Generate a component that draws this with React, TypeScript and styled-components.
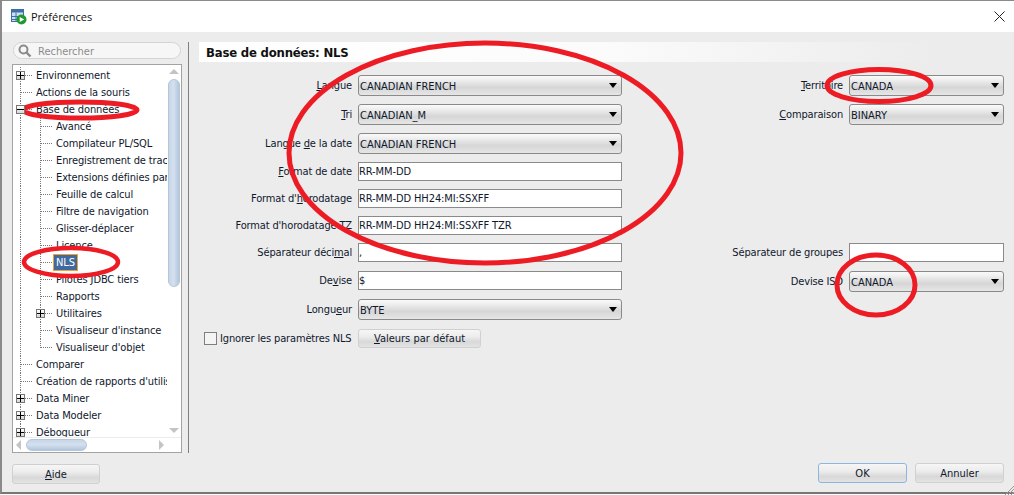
import React from "react";
import styled, { createGlobalStyle } from "styled-components";

const Global = createGlobalStyle`
  html, body { margin: 0; padding: 0; background: #fff; }
  body { font-family: "DejaVu Sans Condensed", "DejaVu Sans", sans-serif; font-stretch: condensed; font-size: 11px; color: #10182c; }
  * { box-sizing: border-box; }
  u { text-underline-offset: 1px; }
`;

const Screen = styled.div`
  position: relative;
  width: 1014px;
  height: 495px;
  overflow: hidden;
  background: #fff;
`;
const Win = styled.div`
  width: 1014px;
  height: 494px;
  display: flex;
  flex-direction: column;
  border-top: 1px solid #8a8a8a;
  border-left: 2px solid #8a8a8a;
  border-bottom: 2px solid #777;
  background: #ececec;
`;
const TitleBar = styled.div`
  height: 31px;
  flex: none;
  display: flex;
  align-items: center;
  padding: 0 9px;
  gap: 4px;
  background: #fff;
`;
const TitleText = styled.span`
  flex: 1;
  font-family: "Open Sans", "Noto Sans", sans-serif;
  font-stretch: normal;
  font-size: 11px;
  color: #111;
`;
const Body = styled.div`
  flex: 1;
  min-height: 0;
  display: flex;
  padding-top: 10px;
`;
const Sidebar = styled.div`
  width: 170px;
  margin-left: 10px;
  display: flex;
  flex-direction: column;
  gap: 5px;
`;
const Search = styled.div`
  height: 18px;
  margin-left: 1px;
  margin-right: 1px;
  display: flex;
  align-items: center;
  gap: 6px;
  padding: 1px 0 0 4px;
  background: #f6f6f6;
  border: 1px solid #d4d4d4;
  border-radius: 9px;
  color: #8c8c8c;
  font-size: 11px;
`;
const TreeBox = styled.div`
  height: 389px;
  display: grid;
  grid-template-columns: 1fr 14px;
  grid-template-rows: 1fr 15px;
  border: 1px solid #a3a3a3;
  background: #fff;
`;
const TreeList = styled.div`
  overflow: hidden;
  padding-top: 2px;
`;
const Row = styled.div`
  height: 17px;
  display: flex;
  align-items: center;
  white-space: nowrap;
  letter-spacing: -0.12px;
  color: #10182c;
`;
const Cell = styled.span<{ $kind: "line" | "tee" | "corner" }>`
  position: relative;
  flex: none;
  width: 20px;
  height: 17px;
  &::before {
    content: "";
    position: absolute;
    left: 7px;
    top: 0;
    height: ${(p) => (p.$kind === "corner" ? "9px" : "17px")};
    border-left: 1px dotted #777;
  }
  &::after {
    content: "";
    display: ${(p) => (p.$kind === "line" ? "none" : "block")};
    position: absolute;
    left: 8px;
    top: 8px;
    width: 11px;
    border-top: 1px dotted #777;
  }
`;
const Expander = styled.span`
  position: absolute;
  z-index: 1;
  left: 3px;
  top: 4px;
  width: 9px;
  height: 9px;
  border: 1px solid #777;
  background: linear-gradient(#fff, #d8d8d8);
  display: flex;
  align-items: center;
  justify-content: center;
  color: #000;
  svg { display: block; }
`;
const Label = styled.span<{ $selected?: boolean }>`
  padding: ${(p) => (p.$selected ? "1px 2px" : "0 3px")};
  line-height: ${(p) => (p.$selected ? "13px" : "15px")};
  background: ${(p) => (p.$selected ? "#41699f" : "transparent")};
  color: ${(p) => (p.$selected ? "#fff" : "inherit")};
  border: ${(p) => (p.$selected ? "1px solid #f0a32c" : "0")};
`;
const VScroll = styled.div`
  grid-row: 1;
  grid-column: 2;
  display: flex;
  flex-direction: column;
  align-items: center;
  padding-top: 4px;
  background: #fff;
`;
const Thumb = styled.div<{ $horizontal?: boolean }>`
  border: 1px solid #b5c6da;
  border-radius: 6px;
  background: ${(p) =>
    p.$horizontal
      ? "linear-gradient(#c6d6e8, #d4e0ee 45%, #b3c7dd)"
      : "linear-gradient(90deg, #c6d6e8, #d4e0ee 45%, #b3c7dd)"};
`;
const VThumb = styled(Thumb)`
  width: 12px;
  height: 208px;
  margin-top: 5px;
`;
const ArrowUp = styled.div<{ $down?: boolean }>`
  width: 0;
  height: 0;
  border-left: 5px solid transparent;
  border-right: 5px solid transparent;
  ${(p) => (p.$down ? "border-top: 5px solid #c4c4c4; margin-top: auto; margin-bottom: 4px;" : "border-bottom: 5px solid #c4c4c4;")}
`;
const HScroll = styled.div`
  grid-row: 2;
  grid-column: 1 / 3;
  display: flex;
  align-items: center;
  padding: 0 17px 0 3px;
  border-top: 1px solid #ececec;
  background: #fff;
`;
const ArrowSide = styled.div<{ $right?: boolean }>`
  width: 0;
  height: 0;
  border-top: 5px solid transparent;
  border-bottom: 5px solid transparent;
  ${(p) => (p.$right ? "border-left: 5px solid #c4c4c4; margin-left: auto;" : "border-right: 5px solid #c4c4c4;")}
`;
const HThumb = styled(Thumb)`
  width: 61px;
  height: 12px;
  margin-left: 5px;
`;
const Divider = styled.div`
  width: 1px;
  height: 411px;
  margin-left: 6px;
  background: #7f7f7f;
`;
const Panel = styled.div`
  flex: 1;
  margin-left: 10px;
  display: flex;
  flex-direction: column;
`;
const PanelHead = styled.div`
  height: 20px;
  display: flex;
  align-items: center;
  padding-left: 7px;
  font-size: 13px;
  font-weight: 700;
  letter-spacing: -0.2px;
  color: #111;
  background: linear-gradient(90deg, #fff, #fbfbfb 50%, #ececec 90%);
`;
const Form = styled.div`
  margin-top: 13px;
  padding-right: 10px;
  display: grid;
  grid-template-columns: 154px 264px 1fr 155px;
  grid-template-rows: 29px 29px 29px 27px 27px 27px 28px 28px 30px auto;
  column-gap: 5px;
  align-items: start;
`;
const FieldLabel = styled.label<{ $col: number; $row: number; $combo?: boolean }>`
  grid-column: ${(p) => p.$col};
  grid-row: ${(p) => p.$row};
  justify-self: end;
  white-space: nowrap;
  letter-spacing: -0.15px;
  line-height: ${(p) => (p.$combo ? "21px" : "19px")};
  padding-right: 1px;
`;
const Combo = styled.div<{ $col: number; $row: number }>`
  grid-column: ${(p) => p.$col};
  grid-row: ${(p) => p.$row};
  height: 21px;
  display: flex;
  align-items: center;
  justify-content: space-between;
  padding: 1px 4px 0 1px;
  border: 1px solid #8a8a8a;
  border-radius: 3px;
  background: linear-gradient(#fafafa, #f0f0f0 20%, #d6d6d6 60%, #e6e6e6);
  color: #10182c;
`;
const Caret = styled.span`
  width: 0;
  height: 0;
  margin-top: -1px;
  border-left: 4px solid transparent;
  border-right: 4px solid transparent;
  border-top: 5px solid #000;
`;
const Field = styled.input<{ $col: number; $row: number }>`
  grid-column: ${(p) => p.$col};
  grid-row: ${(p) => p.$row};
  width: 100%;
  height: 19px;
  padding: 0;
  border: 1px solid #8a8a8a;
  background: #fff;
  outline: 0;
  font: inherit;
  font-stretch: condensed;
  letter-spacing: -0.1px;
  color: #10182c;
`;
const IgnoreCell = styled.div`
  grid-column: 1;
  grid-row: 10;
  height: 19px;
  display: flex;
  align-items: center;
  gap: 3px;
  padding-left: 5px;
  white-space: nowrap;
  letter-spacing: -0.15px;
`;
const Check = styled.span`
  flex: none;
  width: 13px;
  height: 13px;
  border: 1px solid #7f7f7f;
  background: #f4f4f4;
`;
const Btn = styled.button<{ $wide?: boolean; $default?: boolean }>`
  width: ${(p) => (p.$wide ? "89px" : "88px")};
  height: 20px;
  padding: 0;
  border: 1px solid ${(p) => (p.$default ? "#8db6de" : "#d0d0d0")};
  border-radius: 3px;
  background: linear-gradient(#f6f6f6, #ececec 40%, #d8d8d8 70%, #e4e4e4);
  font: inherit;
  font-stretch: condensed;
  color: #10182c;
`;
const DefaultsBtn = styled(Btn)`
  grid-column: 2;
  grid-row: 10;
  width: 123px;
  height: 19px;
`;
const Footer = styled.div`
  height: 39px;
  flex: none;
  display: flex;
  align-items: flex-start;
  padding: 10px 10px 0 10px;
  gap: 8px;
`;
const AideBtn = styled(Btn)`
  margin-top: 1px;
  margin-right: auto;
`;
const Grip = styled.svg`
  position: absolute;
  right: 0;
  bottom: 0;
`;
const Marks = styled.svg`
  position: absolute;
  left: 0;
  top: 0;
  pointer-events: none;
`;

type Node = { t: string; cells: ("line" | "tee" | "corner")[]; exp?: "+" | "-"; sel?: boolean };
const L0 = (t: string, exp?: "+" | "-"): Node => ({ t, cells: ["tee"], exp });
const L1 = (t: string, exp?: "+" | "-", last?: boolean, sel?: boolean): Node => ({
  t,
  cells: ["line", last ? "corner" : "tee"],
  exp,
  sel,
});
const tree: Node[] = [
  L0("Environnement", "+"),
  L0("Actions de la souris"),
  L0("Base de données", "-"),
  L1("Avancé"),
  L1("Compilateur PL/SQL"),
  L1("Enregistrement de trace"),
  L1("Extensions définies par l'utilisateur"),
  L1("Feuille de calcul"),
  L1("Filtre de navigation"),
  L1("Glisser-déplacer"),
  L1("Licence"),
  L1("NLS", undefined, false, true),
  L1("Pilotes JDBC tiers"),
  L1("Rapports"),
  L1("Utilitaires", "+"),
  L1("Visualiseur d'instance"),
  L1("Visualiseur d'objet", undefined, true),
  L0("Comparer"),
  L0("Création de rapports d'utilisateur"),
  L0("Data Miner", "+"),
  L0("Data Modeler", "+"),
  L0("Débogueur", "+"),
];

function AppIcon() {
  return (
    <svg width="16" height="16" viewBox="0 0 16 16">
      <rect x="0.5" y="0.5" width="12" height="12" fill="#cfe0f2" stroke="#3f6fa8" />
      <rect x="0.5" y="0.5" width="12" height="3" fill="#3f6fa8" />
      <path d="M0.5 7.5H12.5M0.5 10.5H12.5M5 3.5V12.5" stroke="#3f6fa8" />
      <circle cx="10.5" cy="10.5" r="5" fill="#1f9a2e" />
      <path d="M8.7 7.9L13.2 10.5L8.7 13.1Z" fill="#fff" />
    </svg>
  );
}

export default function App() {
  return (
    <Screen>
      <Global />
      <Win>
        <TitleBar>
          <AppIcon />
          <TitleText>Préférences</TitleText>
          <svg width="11" height="11" viewBox="0 0 11 11">
            <path d="M0.5 0.5L10.5 10.5M10.5 0.5L0.5 10.5" stroke="#222" strokeWidth="1" fill="none" />
          </svg>
        </TitleBar>
        <Body>
          <Sidebar>
            <Search>
              <svg width="14" height="14" viewBox="0 0 14 14">
                <circle cx="5.5" cy="5.5" r="4" fill="none" stroke="#8a8a8a" strokeWidth="2" />
                <path d="M8.5 8.5L12.5 12.5" stroke="#8a8a8a" strokeWidth="2.4" />
              </svg>
              Rechercher
            </Search>
            <TreeBox>
              <TreeList>
                {tree.map((n) => (
                  <Row key={n.t}>
                    {n.cells.map((c, i) => (
                      <Cell key={i} $kind={c}>
                        {i === n.cells.length - 1 && n.exp && (
                          <Expander>
                            <svg width="7" height="7" viewBox="0 0 7 7">
                              <path d={n.exp === "+" ? "M0 3.5H7M3.5 0V7" : "M0 3.5H7"} stroke="#000" />
                            </svg>
                          </Expander>
                        )}
                      </Cell>
                    ))}
                    <Label $selected={n.sel}>{n.t}</Label>
                  </Row>
                ))}
              </TreeList>
              <VScroll>
                <ArrowUp />
                <VThumb />
                <ArrowUp $down />
              </VScroll>
              <HScroll>
                <ArrowSide />
                <HThumb $horizontal />
                <ArrowSide $right />
              </HScroll>
            </TreeBox>
          </Sidebar>
          <Divider />
          <Panel>
            <PanelHead>Base de données: NLS</PanelHead>
            <Form>
              <FieldLabel $col={1} $row={1} $combo><u>L</u>angue</FieldLabel>
              <Combo $col={2} $row={1}>CANADIAN FRENCH<Caret /></Combo>
              <FieldLabel $col={3} $row={1} $combo><u>T</u>erritoire</FieldLabel>
              <Combo $col={4} $row={1}>CANADA<Caret /></Combo>

              <FieldLabel $col={1} $row={2} $combo><u>T</u>ri</FieldLabel>
              <Combo $col={2} $row={2}>CANADIAN_M<Caret /></Combo>
              <FieldLabel $col={3} $row={2} $combo><u>C</u>omparaison</FieldLabel>
              <Combo $col={4} $row={2}>BINARY<Caret /></Combo>

              <FieldLabel $col={1} $row={3} $combo>Langue <u>d</u>e la date</FieldLabel>
              <Combo $col={2} $row={3}>CANADIAN FRENCH<Caret /></Combo>

              <FieldLabel $col={1} $row={4}><u>F</u>ormat de date</FieldLabel>
              <Field $col={2} $row={4} readOnly value="RR-MM-DD" />

              <FieldLabel $col={1} $row={5}>Format d'<u>h</u>orodatage</FieldLabel>
              <Field $col={2} $row={5} readOnly value="RR-MM-DD HH24:MI:SSXFF" />

              <FieldLabel $col={1} $row={6}>Format d'horodatage TZ</FieldLabel>
              <Field $col={2} $row={6} readOnly value="RR-MM-DD HH24:MI:SSXFF TZR" />

              <FieldLabel $col={1} $row={7}>Séparateur déci<u>m</u>al</FieldLabel>
              <Field $col={2} $row={7} readOnly value="," />
              <FieldLabel $col={3} $row={7}>Séparateur de groupes</FieldLabel>
              <Field $col={4} $row={7} readOnly value="" />

              <FieldLabel $col={1} $row={8}>De<u>v</u>ise</FieldLabel>
              <Field $col={2} $row={8} readOnly value="$" />
              <FieldLabel $col={3} $row={8} $combo>Devise ISO</FieldLabel>
              <Combo $col={4} $row={8}>CANADA<Caret /></Combo>

              <FieldLabel $col={1} $row={9} $combo>Longu<u>e</u>ur</FieldLabel>
              <Combo $col={2} $row={9}>BYTE<Caret /></Combo>

              <IgnoreCell>
                <Check />
                <span>I<u>g</u>norer les paramètres NLS</span>
              </IgnoreCell>
              <DefaultsBtn><u>V</u>aleurs par défaut</DefaultsBtn>
            </Form>
          </Panel>
        </Body>
        <Footer>
          <AideBtn><u>A</u>ide</AideBtn>
          <Btn $wide $default>OK</Btn>
          <Btn $wide>Annuler</Btn>
        </Footer>
      </Win>
      <Grip width="10" height="10" viewBox="0 0 10 10">
        <path d="M10 1L1 10M10 4L4 10M10 7L7 10" stroke="#999" fill="none" />
      </Grip>
      <Marks width="1014" height="495" viewBox="0 0 1014 495">
        <g fill="none" stroke="#ed1c24">
          <ellipse cx="485" cy="153" rx="196" ry="110" strokeWidth="5" />
          <ellipse cx="80" cy="110" rx="57" ry="8" strokeWidth="5" />
          <ellipse cx="71" cy="262" rx="47" ry="14" strokeWidth="4.5" />
          <ellipse cx="879" cy="85.5" rx="52" ry="16" strokeWidth="5" />
          <ellipse cx="876" cy="285" rx="39" ry="30" strokeWidth="5" />
        </g>
      </Marks>
    </Screen>
  );
}
